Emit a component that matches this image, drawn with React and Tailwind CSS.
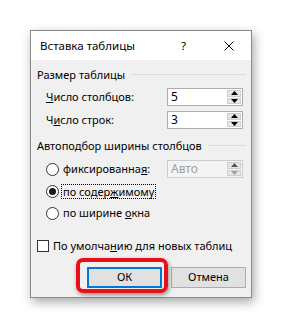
import React from "react";

function Arrow({ up, color = "#000" }) {
  return (
    <svg width="7" height="4" viewBox="0 0 7 4">
      {up ? <path d="M0 4 L3.5 0 L7 4 Z" fill={color} /> : <path d="M0 0 L7 0 L3.5 4 Z" fill={color} />}
    </svg>
  );
}

function Spin({ value, disabled }) {
  return (
    <div
      className={
        "flex h-[18px] w-[76px] border " +
        (disabled ? "border-[#cccccc] bg-[#f4f4f4] text-[#a0a0a0]" : "border-[#adadad] bg-white text-black")
      }
    >
      <span className="flex-1 pl-[3px] text-[12px] leading-[16px]">{value}</span>
      <div className="flex w-[16px] flex-col gap-px p-px">
        <div className="flex flex-1 items-center justify-center border border-[#cfcfcf] bg-[#e6e6e6]">
          <Arrow up color={disabled ? "#555" : "#000"} />
        </div>
        <div className="flex flex-1 items-center justify-center border border-[#cfcfcf] bg-[#e6e6e6]">
          <Arrow color={disabled ? "#a0a0a0" : "#000"} />
        </div>
      </div>
    </div>
  );
}

function Group({ title, className }) {
  return (
    <div className={"flex h-4 items-center pl-[6px] pr-[5px] " + className}>
      <span>{title}</span>
      <div className="ml-[6px] mt-[-2px] h-px flex-1 bg-[#dcdcdc]" />
    </div>
  );
}

function Radio({ checked }) {
  return (
    <span className="grid h-[13px] w-[13px] place-items-center rounded-full border border-[#333] bg-white">
      {checked && <span className="h-[7px] w-[7px] rounded-full bg-[#1a1a1a]" />}
    </span>
  );
}

export default function App() {
  return (
    <div className="h-[329px] w-[283px] bg-white pl-[30px] pt-[30px] font-['Noto_Sans',sans-serif] text-[11px] text-black">
      <div className="flex h-[268px] w-[222px] flex-col border border-[#8a8a8a] bg-[#f0f0f0] shadow-[2px_4px_10px_rgba(0,0,0,0.35)]">
        <div className="flex h-[29px] items-center bg-white pl-[9px] pr-[17px] text-[11.5px]">
          <span className="flex-1">Вставка таблицы</span>
          <span>?</span>
          <svg className="ml-[38px]" width="10" height="10" viewBox="0 0 10 10">
            <path d="M0.5 0.5 L9.5 9.5 M9.5 0.5 L0.5 9.5" stroke="#000" strokeWidth="1" />
          </svg>
        </div>

        <Group title="Размер таблицы" className="mt-[7px]" />
        <div className="mt-[5px] flex h-[18px] items-center pl-[15px] pr-[8px]">
          <span className="flex-1">
            <u>Ч</u>исло столбцов:
          </span>
          <Spin value="5" />
        </div>
        <div className="mt-[5px] flex h-[18px] items-center pl-[15px] pr-[8px]">
          <span className="flex-1">
            Ч<u>и</u>сло строк:
          </span>
          <Spin value="3" />
        </div>

        <Group title="Автоподбор ширины столбцов" className="mt-[9px]" />
        <div className="mt-[6px] flex h-[18px] items-center pl-[15px] pr-[8px]">
          <Radio />
          <span className="ml-[4px] flex-1">
            фиксированна<u>я</u>:
          </span>
          <Spin value="Авто" disabled />
        </div>
        <div className="mt-[4px] flex h-[18px] items-center pl-[15px]">
          <Radio checked />
          <span className="ml-[3px] px-px leading-[13px] outline-1 outline-dotted outline-black">
            по содер<u>ж</u>имому
          </span>
        </div>
        <div className="mt-[4px] flex h-[18px] items-center pl-[15px]">
          <Radio />
          <span className="ml-[4px]">
            по ширине <u>о</u>кна
          </span>
        </div>

        <div className="mt-[16px] flex h-4 items-center pl-[6px]">
          <span className="h-[12px] w-[12px] border border-[#333] bg-white" />
          <span className="ml-[4px]">
            По умолча<u>н</u>ию для новых таблиц
          </span>
        </div>

        <div className="mt-[13px] flex justify-end gap-[9px] pr-[5px]">
          <div className="relative">
            <div className="absolute -bottom-[5px] -left-[11px] -right-[6px] -top-[9px] rounded-[7px] border-[4px] border-[#e8101a] shadow-[1px_2px_4px_rgba(0,0,0,0.4)]" />
            <button className="relative flex h-[21px] w-[75px] items-center justify-center border-2 border-[#0078d7] bg-[#e1e1e1]">
              ОК
            </button>
          </div>
          <button className="flex h-[21px] w-[75px] items-center justify-center border border-[#adadad] bg-[#e1e1e1]">
            Отмена
          </button>
        </div>
      </div>
    </div>
  );
}
